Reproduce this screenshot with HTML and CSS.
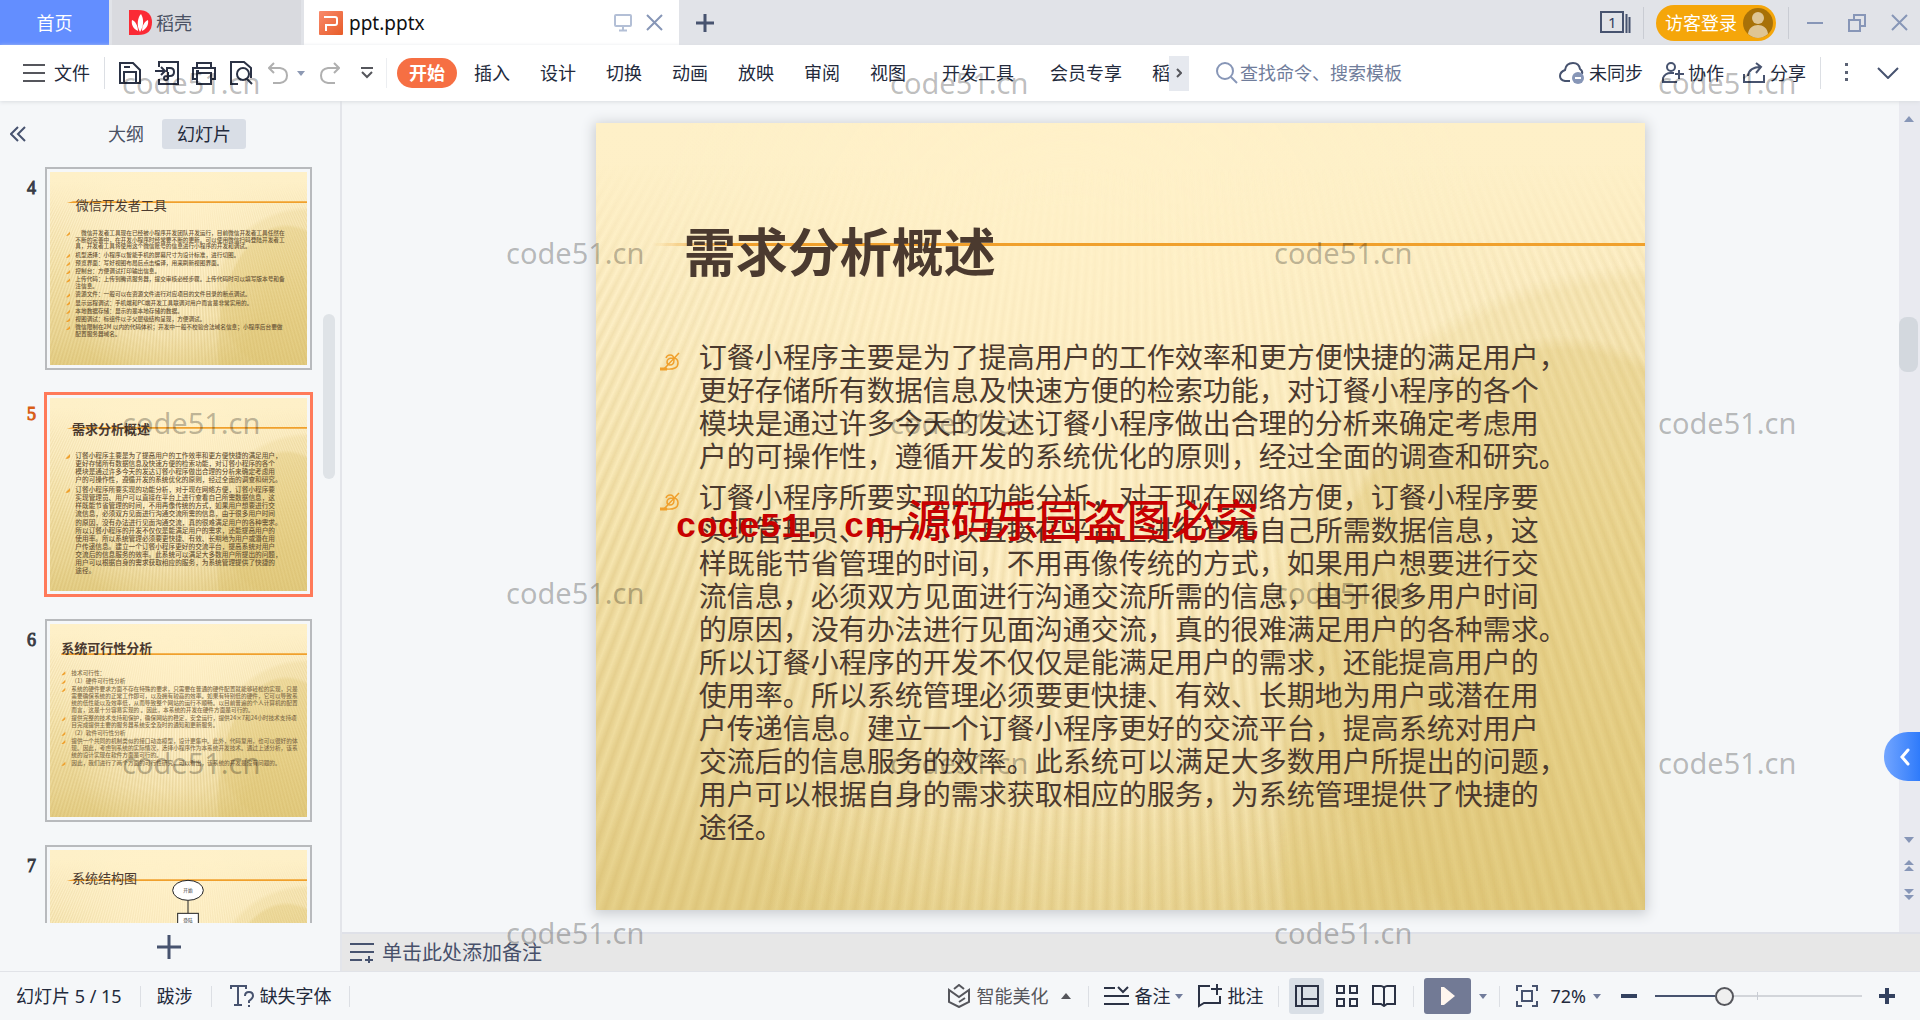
FILE: index.html
```html
<!DOCTYPE html>
<html lang="zh-CN">
<head>
<meta charset="utf-8">
<title>ppt.pptx</title>
<link rel="stylesheet" href="styles.css">
</head>
<body>
<header class="tabs">
  <button class="tab tab-home">首页</button>
  <button class="tab tab-docer">
    <svg width="23" height="25" viewBox="0 0 23 25"><path d="M0 0h9q14 0 14 12.500T9 25H0z" fill="#fb2a35"/><path d="M11 22C7 15 9 7 12 4c3 5 3 12-1 18zM9 21C4 19 2 14 3 10c3 1 6 5 6 11zM13 21c0-5 2-9 6-11 1 5-2 9-6 11z" fill="#fff"/></svg>
    稻壳
  </button>
  <div class="tab tab-file">
    <svg width="24" height="24" viewBox="0 0 24 24"><defs><linearGradient id="pg" x2="1" y2="1"><stop stop-color="#f98a6c"/><stop offset="1" stop-color="#e75c28"/></linearGradient></defs><rect width="24" height="24" rx="1" fill="url(#pg)"/><path d="M5 6h11q2 0 2 2v4q0 2-2 2H7v6" fill="none" stroke="#fff" stroke-width="2"/></svg>
    <span class="file-name">ppt.pptx</span>
    <svg width="18" height="18" viewBox="0 0 18 18" class="line pale"><rect x="1" y="1" width="16" height="11" rx="1"/><path d="M9 12v4M5 16.500h8"/></svg>
    <button class="bare" aria-label="关闭"><svg width="17" height="17" viewBox="0 0 17 17" class="line pale-dark"><path d="M1 1l15 15M16 1L1 16"/></svg></button>
  </div>
  <button class="bare new-tab" aria-label="新建"><svg width="20" height="20" viewBox="0 0 20 20" class="line thick"><path d="M10 1v18M1 10h18"/></svg></button>
  <div class="window-tools">
    <svg width="31" height="23" viewBox="0 0 31 23" class="line"><rect x="1" y="1" width="22" height="20"/><path d="M26.500 3v19M29.500 6v16"/><text x="8" y="17" class="win-count">1</text></svg>
    <i class="rule tall"></i>
    <button class="login">访客登录
      <svg width="30" height="30" viewBox="0 0 30 30"><circle cx="15" cy="15" r="15" fill="#a87108"/><circle cx="15" cy="10" r="6" fill="#dfc594"/><path d="M5 26c1-12 19-12 20 0q-10 8-20 0z" fill="#dfc594"/></svg>
    </button>
    <i class="rule tall"></i>
    <button class="bare win-min" aria-label="最小化"><svg width="16" height="18" viewBox="0 0 16 18" class="line pale-dark"><path d="M0 9h16"/></svg></button>
    <button class="bare win-max" aria-label="还原"><svg width="18" height="18" viewBox="0 0 18 18" class="line pale-dark"><path d="M1 6h11v11H1zM6 6V1h11v11h-5"/></svg></button>
    <button class="bare" aria-label="关闭窗口"><svg width="17" height="17" viewBox="0 0 17 17" class="line pale-dark"><path d="M1 1l15 15M16 1L1 16"/></svg></button>
  </div>
</header>

<nav class="menu">
  <button class="bare file-menu"><svg width="22" height="18" viewBox="0 0 22 18" class="line dim"><path d="M0 1h22M0 9h22M0 17h22"/></svg>文件</button>
  <i class="rule tall"></i>
  <div class="quick">
    <button class="bare" aria-label="保存"><svg width="24" height="24" viewBox="0 0 24 24" class="line dark"><path d="M2 2h13l7 7v13H2zM6 22V11h12v11M6 6h6"/></svg></button>
    <button class="bare" aria-label="输出为PDF"><svg width="24" height="24" viewBox="0 0 24 24" class="line dark"><path d="M4 6V1h19v22H4v-5M0 10h9M6 6l4 4-4 4M12 11V7h3q4 0 4 4t-4 4h-3q-3 0-3 2t2 2 2-2v-6"/></svg></button>
    <button class="bare" aria-label="打印"><svg width="24" height="24" viewBox="0 0 24 24" class="line dark"><path d="M5 7V2h14v5M5 18H1V7h22v11h-4M5 12h14v11H5zM4 10h3"/></svg></button>
    <button class="bare" aria-label="打印预览"><svg width="24" height="24" viewBox="0 0 24 24" class="line dark"><path d="M9 23H2V1h13l7 6v10"/><circle cx="14" cy="13" r="6"/><path d="M18 18l5 5"/></svg></button>
    <button class="bare undo" aria-label="撤销"><svg width="20" height="22" viewBox="0 0 20 22" class="line faint"><path d="M6 1L1 6l5 5M1 6h11q7 1 7 7.500T12 21H5"/></svg></button>
    <svg width="8" height="5" viewBox="0 0 8 5" class="undo-more"><path d="M0 0h8L4 5z" fill="#8d99b3"/></svg>
    <button class="bare redo" aria-label="重做"><svg width="20" height="22" viewBox="0 0 20 22" class="line faint"><path d="M14 1l5 5-5 5M19 6H8q-7 1-7 7.500T8 21h7"/></svg></button>
    <button class="bare" aria-label="更多"><svg width="12" height="12" viewBox="0 0 12 12" class="line dim"><path d="M0 1h12M1 5l5 5 5-5"/></svg></button>
  </div>
  <div class="ribbon">
    <button class="pill">开始</button><a href="#">插入</a><a href="#">设计</a><a href="#">切换</a><a href="#">动画</a><a href="#">放映</a><a href="#">审阅</a><a href="#">视图</a><a href="#" class="wide">开发工具</a><a href="#">会员专享</a><a href="#">稻</a>
  </div>
  <button class="bare scroll-right" aria-label="更多选项卡"><svg width="6" height="10" viewBox="0 0 6 10" class="line dim"><path d="M1 1l4 4-4 4"/></svg></button>
  <label class="search"><svg width="22" height="22" viewBox="0 0 22 22" class="line pale-dark"><circle cx="9" cy="9" r="8"/><path d="M15 15l6 6"/></svg><input type="text" placeholder="查找命令、搜索模板" aria-label="查找命令、搜索模板"></label>
  <div class="share">
    <button class="bare"><svg width="26" height="24" viewBox="0 0 26 24" class="line"><path d="M11 20H6Q1 19 1 15t5-6q1-7 8-7 6 0 7 6 3 2 2 5"/><circle cx="19" cy="17" r="6" fill="#8796b7" stroke="none"/><path d="M16 17h6" stroke="#fff"/></svg>未同步</button>
    <button class="bare"><svg width="22" height="22" viewBox="0 0 22 22" class="line"><circle cx="9" cy="5" r="4"/><path d="M15 20H1v-4q2-5 8-5h3M17 8v9M13 12h9"/></svg>协作</button>
    <button class="bare"><svg width="23" height="22" viewBox="0 0 23 22" class="line"><path d="M5 14q1-9 13-9M13 1l5 4-5 6M1 12v8h20v-7"/></svg>分享</button>
    <i class="rule tall"></i>
    <button class="bare dots" aria-label="更多"><svg width="4" height="20" viewBox="0 0 4 20"><path d="M0 0h3v3H0zM0 8h3v3H0zM0 15h3v3H0z" fill="#5b6274"/></svg></button>
    <button class="bare" aria-label="折叠功能区"><svg width="22" height="12" viewBox="0 0 22 12" class="line"><path d="M1 1l10 10L21 1"/></svg></button>
  </div>
</nav>

<main class="work">
  <aside class="side">
    <div class="side-head">
      <button class="bare collapse" aria-label="收起"><svg width="16" height="16" viewBox="0 0 16 16" class="line"><path d="M8 1L1 8l7 7M15 1L8 8l7 7"/></svg></button>
      <button class="bare outline-tab">大纲</button>
      <button class="bare slides-tab">幻灯片</button>
    </div>
    <ol class="thumbs">
      <li><span>4</span><div class="frame"><div class="art"><svg class="page" viewBox="0 0 771 579">
        <path d="M70 88h701v5H50z" class="orange"/>
        <text x="77" y="113" class="t-title">微信开发者工具</text>
        <g class="t-small">
        <text x="93" y="188">微信开发者工具现在已经被小程序开发团队开发运行，目前微信开发者工具任然在</text>
        <text x="76" y="209">不断的完善中，在开发小程序时经常要不断的更新。可以使用微信扫码登陆开发者工</text>
        <text x="76" y="229">具，开发者工具将使用这个微信账号的信息进行小程序的开发和调试。</text>
        <text x="76" y="254">机型选择：小程序以智能手机的屏幕尺寸为设计标准，进行切图。</text>
        <text x="76" y="279">预览界面：写好视图布局后点击编译，用来刷新视图界面。</text>
        <text x="76" y="303">控制台：方便调试打印输出信息。</text>
        <text x="76" y="328">上传代码：上传到腾讯服务器，提交审核必经步骤。上传代码时可以填写版本号和备</text>
        <text x="76" y="349">注信息。</text>
        <text x="76" y="373">资源文件：一般可以在资源文件进行对应项目的文件目录的断点调试。</text>
        <text x="76" y="398">显示远程调试：手机端和PC端开发工具联调对用户而言是非常实用的。</text>
        <text x="76" y="423">本地数据存储：显示的是本地存储的数据。</text>
        <text x="76" y="448">视图调试：标组件以子父层级结构呈现，方便调试。</text>
        <text x="76" y="472">微信限制在2M 以内的代码体积；开发中一般不校验合法域名信息；小程序后台要做</text>
        <text x="76" y="493">配置服务器域名。</text>
        </g>
        <path class="orange" d="M48 191l12-12v8l-6 4zM48 257l12-12v8l-6 4zM48 281l12-12v8l-6 4zM48 306l12-12v8l-6 4zM48 331l12-12v8l-6 4zM48 376l12-12v8l-6 4zM48 400l12-12v8l-6 4zM48 425l12-12v8l-6 4zM48 450l12-12v8l-6 4zM48 474l12-12v8l-6 4z"/>
      </svg></div></div></li>
      <li class="current"><span>5</span><div class="frame"><div class="art"><svg class="page" viewBox="0 0 771 579">
        <path d="M70 87h701v5H50z" class="orange"/>
        <text x="66" y="109" class="t-title heavy">需求分析概述</text>
        <g class="t-body">
        <text x="76" y="180">订餐小程序主要是为了提高用户的工作效率和更方便快捷的满足用户，</text>
        <text x="76" y="204">更好存储所有数据信息及快速方便的检索功能，对订餐小程序的各个</text>
        <text x="76" y="228">模块是通过许多今天的发达订餐小程序做出合理的分析来确定考虑用</text>
        <text x="76" y="253">户的可操作性，遵循开发的系统优化的原则，经过全面的调查和研究。</text>
        <text x="76" y="282">订餐小程序所要实现的功能分析，对于现在网络方便，订餐小程序要</text>
        <text x="76" y="306">实现管理员、用户可以直接在平台上进行查看自己所需数据信息，这</text>
        <text x="76" y="331">样既能节省管理的时间，不用再像传统的方式，如果用户想要进行交</text>
        <text x="76" y="355">流信息，必须双方见面进行沟通交流所需的信息，由于很多用户时间</text>
        <text x="76" y="380">的原因，没有办法进行见面沟通交流，真的很难满足用户的各种需求。</text>
        <text x="76" y="404">所以订餐小程序的开发不仅仅是能满足用户的需求，还能提高用户的</text>
        <text x="76" y="429">使用率。所以系统管理必须要更快捷、有效、长期地为用户或潜在用</text>
        <text x="76" y="453">户传递信息。建立一个订餐小程序更好的交流平台，提高系统对用户</text>
        <text x="76" y="477">交流后的信息服务的效率。此系统可以满足大多数用户所提出的问题，</text>
        <text x="76" y="502">用户可以根据自身的需求获取相应的服务，为系统管理提供了快捷的</text>
        <text x="76" y="526">途径。</text>
        </g>
        <path class="orange" d="M46 182l14-14v10l-6 4zM46 284l14-14v10l-6 4z"/>
      </svg></div></div></li>
      <li><span>6</span><div class="frame"><div class="art"><svg class="page" viewBox="0 0 771 579">
        <path d="M34 88h737v5H34z" class="orange"/>
        <text x="34" y="88" class="t-title heavy">系统可行性分析</text>
        <g class="t-small pale-text">
        <text x="64" y="152">技术可行性：</text>
        <text x="64" y="177">（1）硬件可行性分析</text>
        <text x="64" y="201">系统的硬件要求方面不存在特殊的要求，只需要在普通的硬件配置就能够轻松的实现，只是</text>
        <text x="64" y="222">需要确保系统的正常工作即可，以及拥有较高的效率。如果有特别低的硬件，它可以导致系</text>
        <text x="64" y="243">统的低性能以及效率低，从而导致整个网站的运行不顺畅。以目前普遍的个人计算机的配置</text>
        <text x="64" y="263">而言，这是十分容易实现的 。因此，本系统的开发在硬件方面是可行的。</text>
        <text x="64" y="288">提供完整的技术支持和保护，确保网站的稳定，安全运行，提供24×7和24小时技术支持项</text>
        <text x="64" y="308">目完成提供主要的服务器系统安全及时的通知和更新服务。</text>
        <text x="64" y="333">（2）软件可行性分析</text>
        <text x="64" y="358">提供一个共同的机制类似的接口动态模型，设计更集中。此外，代码复用，也可以很好的体</text>
        <text x="64" y="378">现。因此，考虑到系统的实际情况，选择小程序作为本系统开发技术。通过上述分析，该系</text>
        <text x="64" y="399">统的设计实现在软件方面是可行的。</text>
        <text x="64" y="423">因此，我们进行了两个方面的可行性研究，可以看出，该系统的开发是没有问题的。</text>
        </g>
        <path class="orange" d="M34 154l12-12v8l-6 4zM34 179l12-12v8l-6 4zM34 203l12-12v8l-6 4zM34 290l12-12v8l-6 4zM34 335l12-12v8l-6 4zM34 360l12-12v8l-6 4zM34 425l12-12v8l-6 4z"/>
      </svg></div></div></li>
      <li><span>7</span><div class="frame"><div class="art"><svg class="page" viewBox="0 0 771 579">
        <path d="M70 88h701v5H50z" class="orange"/>
        <text x="66" y="98" class="t-title">系统结构图</text>
        <g fill="#fff" stroke="#222" stroke-width="3"><path d="M414 152v38"/><ellipse cx="414" cy="121" rx="46" ry="30"/><rect x="383" y="190" width="62" height="50"/></g>
        <text x="400" y="126" class="t-node">开始</text><text x="400" y="216" class="t-node">登陆</text>
      </svg></div></div></li>
    </ol>
    <i class="side-thumb"></i>
    <button class="bare add" aria-label="新建幻灯片"><svg width="24" height="24" viewBox="0 0 24 24" class="line thick"><path d="M12 0v24M0 12h24"/></svg></button>
  </aside>

  <section class="editor">
    <div class="stage-row">
      <div class="stage">
        <article class="slide art">
          <i class="slide-line"></i>
          <h1>需求分析概述</h1>
          <ul>
            <li><svg width="20" height="20" viewBox="0 0 20 20" class="bullet"><path d="M19 1L4 17M0 17h6q12 1 12-6 0-5-5-5-6 0-6 4 0 3 3 3 4 0 4-5 0-5-4-5-3 0-4 3"/><path d="M0 17h7" class="foot"/></svg><p>订餐小程序主要是为了提高用户的工作效率和更方便快捷的满足用户，<br>更好存储所有数据信息及快速方便的检索功能，对订餐小程序的各个<br>模块是通过许多今天的发达订餐小程序做出合理的分析来确定考虑用<br>户的可操作性，遵循开发的系统优化的原则，经过全面的调查和研究。</p></li>
            <li><svg width="20" height="20" viewBox="0 0 20 20" class="bullet"><path d="M19 1L4 17M0 17h6q12 1 12-6 0-5-5-5-6 0-6 4 0 3 3 3 4 0 4-5 0-5-4-5-3 0-4 3"/><path d="M0 17h7" class="foot"/></svg><p>订餐小程序所要实现的功能分析，对于现在网络方便，订餐小程序要<br>实现管理员、用户可以直接在平台上进行查看自己所需数据信息，这<br>样既能节省管理的时间，不用再像传统的方式，如果用户想要进行交<br>流信息，必须双方见面进行沟通交流所需的信息，由于很多用户时间<br>的原因，没有办法进行见面沟通交流，真的很难满足用户的各种需求。<br>所以订餐小程序的开发不仅仅是能满足用户的需求，还能提高用户的<br>使用率。所以系统管理必须要更快捷、有效、长期地为用户或潜在用<br>户传递信息。建立一个订餐小程序更好的交流平台，提高系统对用户<br>交流后的信息服务的效率。此系统可以满足大多数用户所提出的问题，<br>用户可以根据自身的需求获取相应的服务，为系统管理提供了快捷的<br>途径。</p></li>
          </ul>
          <p class="notice"><span>code51. cn-</span>源码乐园盗图必究</p>
        </article>
      </div>
      <div class="scrollbar">
        <svg width="10" height="6" viewBox="0 0 10 6"><path d="M0 6h10L5 0z"/></svg>
        <i class="knob"></i>
        <div class="scroll-end">
          <svg width="10" height="6" viewBox="0 0 10 6"><path d="M0 0h10L5 6z"/></svg>
          <svg width="10" height="12" viewBox="0 0 10 12"><path d="M0 5h10L5 0zM0 11h10L5 6z"/></svg>
          <svg width="10" height="12" viewBox="0 0 10 12"><path d="M0 0h10L5 5zM0 6h10l-5 5z"/></svg>
        </div>
      </div>
    </div>
    <div class="notes"><svg width="24" height="20" viewBox="0 0 24 20" class="line"><path d="M0 1h24M0 9h24M0 17h12M15 17h8M19 13v7"/></svg>单击此处添加备注</div>
  </section>
</main>

<footer class="status">
  <div class="status-left">
    <span class="cell">幻灯片 5 / 15</span><i class="rule"></i>
    <span class="cell">跋涉</span><i class="rule"></i>
    <button class="bare fonts"><svg width="24" height="22" viewBox="0 0 24 22" class="line"><path d="M1 4V1h15v3M8 1v19M4 20h8M15 11q0-4 4-4t4 4q0 2-4 5v2M19 20v2"/></svg>缺失字体</button><i class="rule"></i>
  </div>
  <div class="status-right">
    <button class="bare beautify"><svg width="22" height="24" viewBox="0 0 22 24" class="line dim"><path d="M6 5l5-4 5 4M1 6v12l10 5 10-5V6l-10 7zM11 18l6-4"/></svg>智能美化<svg width="10" height="6" viewBox="0 0 10 6" class="gap-l"><path d="M0 6h10L5 0z" fill="#55565c"/></svg></button>
    <i class="rule"></i>
    <button class="bare note-btn"><svg width="25" height="20" viewBox="0 0 25 20" class="line dark"><path d="M0 2h11M14 1l5 5 5-5M0 10h25M0 18h25"/></svg>备注<svg width="8" height="5" viewBox="0 0 8 5" class="arrow"><path d="M0 0h8L4 5z"/></svg></button>
    <button class="bare comment"><svg width="24" height="24" viewBox="0 0 24 24" class="line dark"><path d="M12 2H1v20l5-3h16v-7M19 0v11M13 5h11"/></svg>批注</button>
    <i class="rule"></i>
    <button class="bare view on" aria-label="普通视图"><svg width="24" height="22" viewBox="0 0 24 22" class="line dark"><path d="M1 1h22v20H1zM7 1v20M7 14h16"/></svg></button>
    <button class="bare view" aria-label="幻灯片浏览"><svg width="22" height="22" viewBox="0 0 22 22" class="line dark"><path d="M1 1h7v7H1zM14 1h7v7h-7zM1 14h7v7H1zM14 14h7v7h-7z"/></svg></button>
    <button class="bare view" aria-label="阅读视图"><svg width="24" height="22" viewBox="0 0 24 22" class="line dark"><path d="M12 3q-1-2-3-2H1v18h8l3 2 3-2h8V1h-8q-2 0-3 2v18"/></svg></button>
    <i class="rule"></i>
    <button class="play" aria-label="放映"><svg width="14" height="18" viewBox="0 0 14 18"><path d="M0 0h3l11 9-11 9H0z" fill="#fff6ee"/></svg></button>
    <svg width="8" height="5" viewBox="0 0 8 5" class="arrow"><path d="M0 0h8L4 5z"/></svg>
    <i class="rule"></i>
    <button class="bare zoom"><svg width="22" height="22" viewBox="0 0 22 22" class="line"><path d="M1 6V1h5M16 1h5v5M21 16v5h-5M6 21H1v-5M6 6h10v10H6z"/></svg>72%<svg width="8" height="5" viewBox="0 0 8 5" class="arrow"><path d="M0 0h8L4 5z"/></svg></button>
    <button class="bare" aria-label="缩小"><svg width="16" height="16" viewBox="0 0 16 16" class="line bold"><path d="M0 8h16"/></svg></button>
    <input type="range" class="zoom-range" min="0" max="100" value="32" aria-label="缩放">
    <button class="bare" aria-label="放大"><svg width="16" height="16" viewBox="0 0 16 16" class="line bold"><path d="M0 8h16M8 0v16"/></svg></button>
  </div>
</footer>

<button class="drawer" aria-label="展开任务窗格"><svg width="10" height="18" viewBox="0 0 10 18"><path d="M8 2L2 9l6 7" fill="none" stroke="#fff" stroke-width="3" stroke-linecap="round"/></svg></button>
<div class="marks" aria-hidden="true">
  <div><span>code51.cn</span><span>code51.cn</span><span>code51.cn</span></div>
  <div class="odd"><span>code51.cn</span><span>code51.cn</span></div>
  <div><span>code51.cn</span><span>code51.cn</span><span>code51.cn</span></div>
  <div class="odd"><span>code51.cn</span><span>code51.cn</span></div>
  <div><span>code51.cn</span><span>code51.cn</span><span>code51.cn</span></div>
  <div class="odd"><span>code51.cn</span><span>code51.cn</span></div>
</div>
</body>
</html>
```

FILE: styles.css
```css
* { box-sizing: border-box; }

body {
  margin: 0;
  height: 100vh;
  display: flex;
  flex-direction: column;
  overflow: hidden;
  background: #f5f7f9;
  color: #232a3c;
  font: 18px/24px "Noto Sans", "Noto Sans CJK SC", sans-serif;
}

button, input { font: inherit; color: inherit; }
button { border: 0; padding: 0; white-space: nowrap; }
a { color: inherit; text-decoration: none; }
svg { display: block; flex: none; }

.bare { background: none; display: flex; align-items: center; }
.line { fill: none; stroke: #47536f; stroke-width: 2; }
.line.pale { stroke: #b3bfd6; }
.line.pale-dark { stroke: #8796b7; }
.line.dim { stroke: #55565c; }
.line.dark { stroke: #2b3245; }
.line.faint { stroke: #b0b0b0; }
.line.thick { stroke-width: 3; }
.line.bold { stroke: #33415f; stroke-width: 4; }
.rule { width: 1px; height: 21px; background: #dcdfe4; flex: none; }
.rule.tall { height: 32px; }

/* document tabs */
.tabs { display: flex; align-items: stretch; height: 45px; background: #e1e3e8; flex: none; }
.tab { display: flex; align-items: center; }
.tab-home { width: 109px; justify-content: center; background: #638eff; color: #fff; }
.tab-docer { width: 189px; margin: 0 3px; padding-left: 17px; gap: 4px; background: #d9dadf; color: #4a5163; }
.tab-file { width: 375px; padding: 0 16px 0 15px; background: #fff; color: #111; gap: 6px; }
.file-name { flex: 1; font-size: 19px; }
.tab-file .bare { margin-left: 8px; }
.new-tab { margin-left: 16px; }
.window-tools { margin-left: auto; padding-right: 12px; display: flex; align-items: center; }
.win-count { font-size: 15px; fill: #33415f; stroke: none; }
.window-tools .rule { margin: 0 12px; background: #c9ccd3; }
.login { height: 36px; padding: 0 3px 0 9px; display: flex; align-items: center; gap: 6px; border-radius: 18px; background: #f5a60a; color: #fff; }
.win-min { margin-left: 6px; }
.win-max { margin: 0 25px; }

/* ribbon menu */
.menu { display: flex; align-items: center; height: 56px; background: #fff; flex: none; box-shadow: 0 1px 4px #d9dce0; position: relative; z-index: 1; }
.file-menu { margin: 0 14px 0 23px; gap: 9px; }
.quick { display: flex; align-items: center; padding-left: 13px; gap: 13px; width: 281px; }
.undo { margin-left: 2px; }
.undo-more { margin-left: -4px; }
.redo { margin-right: 8px; margin-left: 2px; }
.ribbon { display: flex; align-items: center; gap: 30px; width: 783px; padding-left: 10px; white-space: nowrap; border-left: 1px solid #eceef1; flex: none; }
.pill { width: 60px; height: 30px; margin-right: -13px; border-radius: 15px; background: #f66f43; color: #fff; font-weight: 700; flex: none; }
.wide { margin: 0 6px; }
.scroll-right { position: relative; width: 20px; height: 35px; justify-content: center; background: #e6e9ef; }
.search { display: flex; align-items: center; gap: 2px; margin-left: 27px; }
.search input { width: 200px; border: 0; padding: 0; background: none; }
.search input::placeholder { color: #707d9b; opacity: 1; }
.share { margin-left: auto; display: flex; align-items: center; gap: 19px; padding-right: 21px; }
.share .bare { gap: 4px; }
.share .rule { margin-left: -5px; }
.dots { margin: 0 9px 0 5px; }

/* slide list */
.work { flex: 1; min-height: 0; display: flex; }
.side { position: relative; width: 342px; border-right: 2px solid #e3e5ea; display: flex; flex-direction: column; flex: none; }
.side-head { display: flex; align-items: center; padding: 18px 0 18px 10px; height: 66px; }
.outline-tab { margin: 0 18px 0 82px; color: #4a5163; }
.slides-tab { width: 84px; height: 30px; justify-content: center; border-radius: 3px; background: #d9dee6; }
.thumbs { flex: 1; min-height: 0; margin: 0; padding: 0; list-style: none; overflow: hidden; }
.thumbs li { display: flex; height: 226px; padding: 0 28px 0 27px; }
.thumbs li > span { width: 18px; padding-top: 9px; font: 18px/24px "Liberation Serif", serif; -webkit-text-stroke: 1px; color: #3a3d45; }
.frame { flex: 1; height: 203px; border: 2px solid #b8babd; padding: 3px; }
.current .frame { margin: -1px; height: 205px; border: 3px solid #ff7a5a; }
.thumbs .current > span { color: #d85e16; }
.side-thumb { position: absolute; right: 5px; top: 213px; width: 12px; height: 165px; border-radius: 6px; background: #dfe3e7; }
.add { justify-content: center; height: 48px; margin-right: 2px; }

/* slide theme: sand gradient, fanned stripes and two dunes */
.art {
  position: relative;
  isolation: isolate;
  overflow: hidden;
  height: 100%;
  background:
    radial-gradient(ellipse 42% 78% at 45% 38%, #fff1c9 35%, #fff1c900),
    linear-gradient(#fef0c8 0, #fdefc6 25%, #f8e8b4 50%, #efdc9e 78%, #e9d592);
}
.art::before, .art::after { content: ""; position: absolute; inset: 0; z-index: -1; }
.art::before {
  background: repeating-conic-gradient(from 0deg at 52% -110%, #c09c4800 0deg, #c09c483c .24deg, #c09c4800 .48deg);
  -webkit-mask: radial-gradient(ellipse 75% 70% at 50% 0%, #0003 30%, #000), linear-gradient(#0000 5%, #000 22%);
  -webkit-mask-composite: source-in;
  mask: radial-gradient(ellipse 75% 70% at 50% 0%, #0003 30%, #000), linear-gradient(#0000 5%, #000 22%);
  mask-composite: intersect;
}
.art::after {
  background:
    radial-gradient(ellipse 27% 62% at 92% 89%, #d9bd6444 0, #d9bd6444 97%, #d9bd6400),
    radial-gradient(ellipse 36% 45% at 100% 63%, #d9bd6426 0, #d9bd6426 95%, #d9bd6400),
    radial-gradient(ellipse 75% 20% at 20% 104%, #d9bd6444 0, #d9bd6400);
}
.page { width: 100%; height: 100%; font-family: "Noto Sans CJK SC", sans-serif; fill: #6b5638; }
.orange { fill: #f0a02c; }
.t-title { font-size: 39px; fill: #4b3a2f; }
.heavy { font-weight: 700; }
.t-body { font-size: 20px; font-weight: 500; }
.t-small { font-size: 17px; font-weight: 500; }
.pale-text { fill: #85704c; }
.t-node { font-size: 14px; fill: #333; }

/* editing area */
.editor { flex: 1; min-width: 0; display: flex; flex-direction: column; }
.stage-row { flex: 1; min-height: 0; display: flex; }
.stage { flex: 1; min-width: 0; display: flex; justify-content: center; align-items: center; }
.slide { height: calc(100% - 44px); aspect-ratio: 4 / 3; overflow: visible; padding: 90px 0 0 64px; color: #4b3a2f; font-family: "Noto Sans CJK SC", sans-serif; box-shadow: 0 2px 12px 2px #c9ccd0; }
.slide-line { position: absolute; z-index: -1; left: 56px; right: 0; top: 120px; height: 3px; background: linear-gradient(90deg, #f0a02c00, #f0a02c 8%); }
.slide h1 { margin: 0 0 53px; padding-left: 24px; font-size: 52px; line-height: 74px; font-weight: 700; }
.slide ul { margin: 0; padding: 0; list-style: none; display: grid; gap: 8px; }
.slide li { display: flex; gap: 19px; }
.slide li p { margin: 0; font-size: 28px; line-height: 33px; white-space: nowrap; }
.bullet { margin-top: 12px; fill: none; stroke: #f0a02c; stroke-width: 1.5; }
.foot { stroke-width: 3; }
.notice { position: absolute; left: 80px; top: 371px; margin: 0; font-size: 44px; line-height: 48px; font-weight: 500; color: #c80000; white-space: nowrap; }
.notice span { font: 700 35px/48px "Liberation Mono", monospace; }
.scrollbar { width: 21px; padding: 15px 2px 31px 0; background: #e9eaf0; display: flex; flex-direction: column; align-items: center; fill: #8796b7; }
.knob { width: 19px; height: 55px; margin-top: 195px; border-radius: 8px; background: #d3d8de; }
.scroll-end { margin-top: auto; display: grid; gap: 17px; }
.notes { display: flex; align-items: center; gap: 8px; height: 39px; padding-left: 8px; border-top: 2px solid #dfe1e8; background: #e7e7e7; color: #47506a; font-size: 20px; }

/* status bar */
.status { display: flex; align-items: center; justify-content: space-between; height: 49px; border-top: 1px solid #e1e3e8; flex: none; }
.status-left, .status-right { display: flex; align-items: center; }
.cell { padding: 0 17px 0 16px; }
.cell + .rule { margin-left: 1px; }
.fonts { padding: 0 17px 0 18px; gap: 6px; }
.status-right { padding-right: 25px; }
.beautify { gap: 6px; padding-right: 17px; color: #55565c; }
.gap-l { margin-left: 7px; }
.note-btn { margin: 0 15px; gap: 5px; }
.arrow { fill: #717c9b; }
.comment { gap: 5px; padding-right: 15px; }
.view { width: 35px; height: 36px; justify-content: center; margin-left: 2px; }
.view.on { margin: 0 3px 0 10px; background: #d9dfe6; border-radius: 3px; }
.view + .rule { margin-left: 12px; }
.play { width: 47px; height: 36px; margin: 0 8px 0 10px; display: flex; align-items: center; justify-content: center; border-radius: 3px; background: #727a95; }
.play + .arrow { margin-right: 12px; }
.zoom { margin: 0 20px 0 16px; gap: 12px; }
.zoom .arrow { margin-left: -5px; }
.zoom-range { -webkit-appearance: none; appearance: none; width: 207px; height: 20px; margin: 0 17px 0 18px; background: linear-gradient(#47536f, #47536f) 0 9px / 60px 2px no-repeat, linear-gradient(#c9cdd4, #c9cdd4) 102px 6px / 1px 8px no-repeat, linear-gradient(#d2d5da, #d2d5da) 0 9px / 100% 2px no-repeat; }
.zoom-range::-webkit-slider-thumb { -webkit-appearance: none; width: 19px; height: 19px; border: 2px solid #55565c; border-radius: 50%; background: #efefef; }

/* floating pieces over the window */
.drawer { position: absolute; z-index: 2; right: 0; top: 732px; width: 36px; height: 49px; padding-left: 16px; border-radius: 24px 0 0 24px; background: linear-gradient(90deg, #72a5ff, #2f7bfb); }
.marks { position: absolute; z-index: 3; inset: 63px 0 0; pointer-events: none; color: #0004; font: 29px/40px "Noto Sans", sans-serif; overflow: hidden; }
.marks div { display: grid; grid-template-columns: 40vw 40vw auto; padding-left: 122px; height: 170px; }
.marks .odd { padding-left: 506px; }
.marks div:last-child { height: 40px; }
```
